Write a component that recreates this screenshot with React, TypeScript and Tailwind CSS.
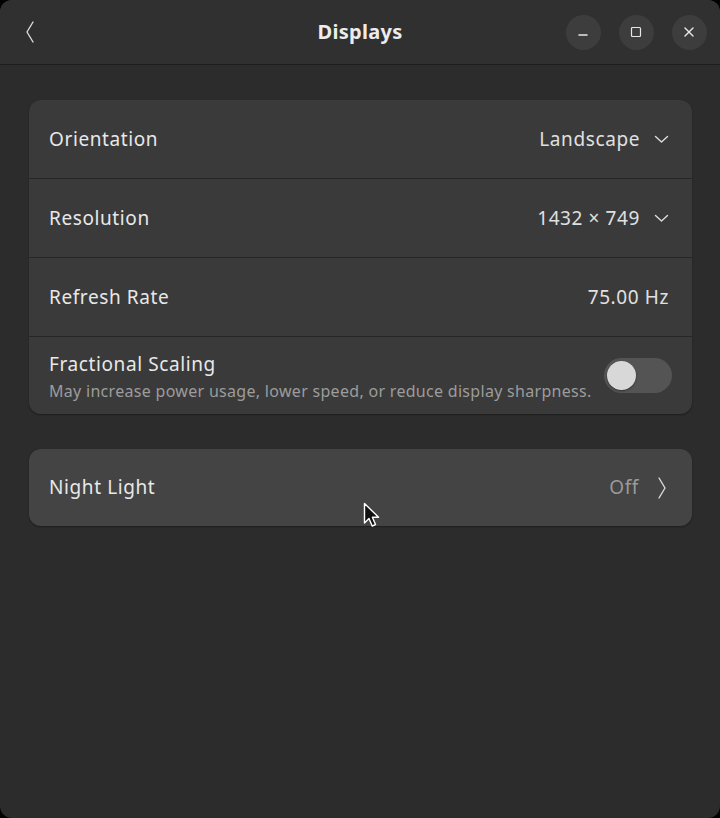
import { Minus, Square, X } from 'lucide-react';

const font = { fontFamily: '"Noto Sans", "Open Sans", sans-serif' };

function ChevronDownThin() {
  return (
    <svg width="15" height="10" viewBox="0 0 15 10" className="text-[#dcdcdc]">
      <path d="M1.5 2.5 L7.5 8 L13.5 2.5" fill="none" stroke="currentColor" strokeWidth="1.4" strokeLinecap="round" strokeLinejoin="round" />
    </svg>
  );
}

function ChevronSide({ dir }: { dir: 'left' | 'right' }) {
  return (
    <svg width="10" height="24" viewBox="0 0 10 24" className="text-[#dcdcdc]">
      <path
        d={dir === 'left' ? 'M8 2 L2 12 L8 22' : 'M2 2 L8 12 L2 22'}
        fill="none"
        stroke="currentColor"
        strokeWidth="1.4"
        strokeLinecap="round"
        strokeLinejoin="round"
      />
    </svg>
  );
}

function Row({ label, value, chevron, last }: { label: string; value: string; chevron?: boolean; last?: boolean }) {
  return (
    <div
      className={
        'flex h-[79px] items-center justify-between pl-5 pr-[23px] ' + (last ? '' : 'border-b border-[#262626]')
      }
    >
      <span className="text-[19px] tracking-[0.6px] text-[#e8e8e8]">{label}</span>
      <div className="flex items-center gap-[14px] text-[19px] tracking-[0.6px] text-[#e0e0e0]">
        <span>{value}</span>
        {chevron && <ChevronDownThin />}
      </div>
    </div>
  );
}

function Cursor() {
  return (
    <svg className="absolute left-[363px] top-[502px]" width="20" height="28" viewBox="0 0 20 28">
      <path
        d="M1.5 1.5 L1.5 21 L6 16.5 L9.2 24 L12.5 22.6 L9.4 15.3 L15.6 15.3 Z"
        fill="#111"
        stroke="#fff"
        strokeWidth="1.4"
        strokeLinejoin="round"
      />
    </svg>
  );
}

export default function App() {
  return (
    <div className="h-[818px] w-[720px] bg-black" style={font}>
      <div className="relative flex h-full flex-col overflow-hidden rounded-[12px] bg-[#2c2c2c]">
        <header className="flex h-[65px] shrink-0 items-center justify-between border-b border-[#1e1e1e] bg-[#303030] px-[13px]">
          <div className="flex w-[160px] items-center pl-[12px]">
            <ChevronSide dir="left" />
          </div>
          <h1 className="text-[20px] font-bold tracking-[0.3px] text-[#ececec]">Displays</h1>
          <div className="flex w-[160px] items-center justify-end gap-[18px]">
            <button className="flex h-[35px] w-[35px] items-center justify-center rounded-full bg-[#3d3d3d] text-[#e6e6e6]">
              <Minus size={14} strokeWidth={2.2} className="mt-[6px]" />
            </button>
            <button className="flex h-[35px] w-[35px] items-center justify-center rounded-full bg-[#3d3d3d] text-[#e6e6e6]">
              <Square size={12} strokeWidth={2.4} />
            </button>
            <button className="flex h-[35px] w-[35px] items-center justify-center rounded-full bg-[#3d3d3d] text-[#e6e6e6]">
              <X size={16} strokeWidth={2} />
            </button>
          </div>
        </header>

        <main className="flex flex-col gap-[35px] pl-[29px] pr-[28px] pt-[35px]">
          <section className="overflow-hidden rounded-[12px] bg-[#3a3a3a] shadow-[0_1px_2px_rgba(0,0,0,0.35)]">
            <Row label="Orientation" value="Landscape" chevron />
            <Row label="Resolution" value="1432 × 749" chevron />
            <Row label="Refresh Rate" value="75.00 Hz" />
            <div className="flex h-[77px] items-center justify-between pl-5 pr-5">
              <div className="flex flex-col pt-[4px]">
                <span className="text-[19px] leading-[24px] tracking-[0.6px] text-[#e8e8e8]">Fractional Scaling</span>
                <span className="mt-[3px] text-[16px] leading-[24px] tracking-[0.3px] text-[#9c9c9c]">
                  May increase power usage, lower speed, or reduce display sharpness.
                </span>
              </div>
              <div className="flex h-[35px] w-[68px] shrink-0 items-center rounded-full bg-[#545454] px-[3px]">
                <div className="h-[29px] w-[29px] rounded-full bg-[#d8d8d8] shadow-[0_1px_2px_rgba(0,0,0,0.4)]" />
              </div>
            </div>
          </section>

          <section className="flex h-[77px] items-center justify-between rounded-[12px] bg-[#444444] pl-5 pr-[25px] shadow-[0_1px_2px_rgba(0,0,0,0.35)]">
            <span className="text-[19px] tracking-[0.6px] text-[#e8e8e8]">Night Light</span>
            <div className="flex items-center gap-[18px] text-[19px] tracking-[0.6px] text-[#9a9a9a]">
              <span>Off</span>
              <ChevronSide dir="right" />
            </div>
          </section>
        </main>
        <Cursor />
      </div>
    </div>
  );
}
